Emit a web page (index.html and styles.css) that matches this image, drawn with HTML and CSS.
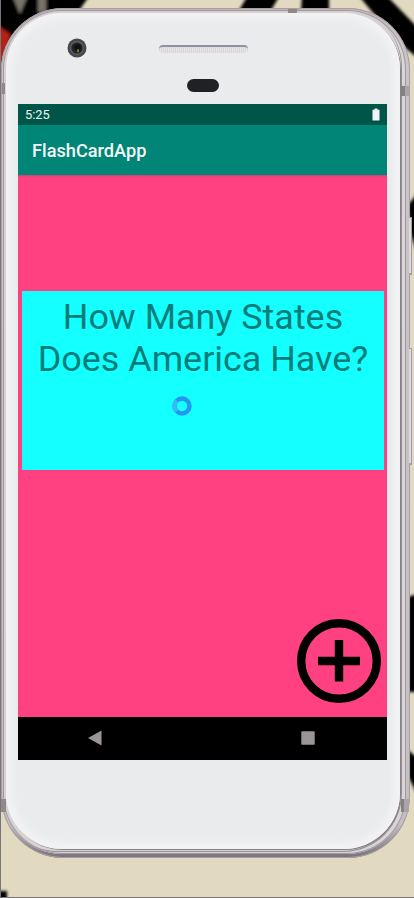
FILE: index.html
```html
<!DOCTYPE html>
<html lang="en">
<head>
<meta charset="utf-8">
<title>FlashCardApp</title>
<link rel="stylesheet" href="styles.css">
</head>
<body>
<svg class="wallpaper" viewBox="0 0 414 898" aria-hidden="true">
  <defs><filter id="soft" x="-20%" y="-20%" width="140%" height="140%"><feGaussianBlur stdDeviation="1.8"/></filter></defs>
  <g filter="url(#soft)">
    <path d="M-5-5H90L78 12 40 30-5 70Z"/>
    <path d="M-5 24L10 34 6 60-5 62Z" fill="#b52218"/>
    <path d="M12-5H28L20 14ZM38-5H46L46 12H38Z" fill="#777266"/>
    <path d="M248-5H280L270 12H238ZM302-5H329V12H301ZM358-5H386L420 30V60L396 40Z"/>
    <path d="M408 205L420 190V262L410 232ZM408 598Q414 592 420 598V692H408ZM408 750L420 760V800L408 776Z"/>
    <path d="M-4 891H7V902H-4Z"/>
  </g>
  <path d="M.5 0V897.5H414" fill="none" stroke="#77757a"/>
</svg>
<main class="phone">
  <div class="rim">
    <div class="body">
      <header class="hardware">
        <svg class="camera" viewBox="0 0 20 20" aria-hidden="true">
          <circle cx="10" cy="10" r="9.5" fill="#47484b"/><circle cx="10" cy="10" r="7" fill="#5b5c5f"/>
          <circle cx="10" cy="10" r="5.6" fill="#202224"/><circle cx="10.5" cy="9.5" r="3" fill="#111"/>
          <path d="M10 11.2h2v3h-2z" fill="#77712f"/>
        </svg>
        <div class="speaker"></div>
        <div class="sensor"></div>
      </header>
      <section class="screen">
        <div class="status"><span>5:25</span>
          <svg width="8" height="13" viewBox="0 0 8 13"><path d="M2.5.5h3v1.2H7.5v10.8H.5V1.7h2z" fill="#f4f4f4"/></svg>
        </div>
        <div class="appbar">FlashCardApp</div>
        <div class="content">
          <div class="card">
            <p class="question">How Many States<br>Does America Have?</p>
            <svg class="spinner" viewBox="0 0 20 20"><circle cx="10" cy="10" r="7.5"/><path d="M4.7 15.3A7.5 7.5 0 0 1 4.7 4.7"/></svg>
          </div>
          <svg class="add" viewBox="0 0 84 84"><circle cx="42" cy="42" r="37.8"/><path d="M42 21V62.500M21 42H63"/></svg>
        </div>
        <nav class="nav">
          <svg width="14" height="16" viewBox="0 0 14 16"><path d="M0 8L13.500 .5V15.500Z"/></svg>
          <svg width="14" height="14" viewBox="0 0 14 14"><rect x=".3" y=".2" width="13.400" height="13.600" rx=".8"/></svg>
        </nav>
      </section>
    </div>
  </div>
  <i class="band band-tl"></i><i class="band band-tr"></i><i class="band band-top"></i>
  <i class="band band-bl"></i><i class="band band-br"></i>
  <i class="key power"></i><i class="key volume"></i>
</main>
</body>
</html>
```
FILE: styles.css
```css
* { box-sizing: border-box; }
html, body { height: 100%; }
body {
  margin: 0;
  overflow: hidden;
  background: #e2d9c1;
  font-family: Roboto, sans-serif;
}
.wallpaper { position: absolute; inset: 0; width: 414px; height: 898px; }
.phone {
  position: relative;
  width: 409px;
  height: 850px;
  margin: 8px 0 0 1px;
  padding: 2px 4px 4px 2px;
  border-radius: 62px;
  background: linear-gradient(#bdb4b7, #cbc4c8 3%, #c5bec2 96%, #77717a);
  box-shadow: inset 0 0 0 1px #a69fa3;
}
.rim {
  height: 844px;
  padding: 3px 6px 5px 3px;
  border-radius: 59px;
  background: #d7d1d4;
  box-shadow: inset 0 0 0 1px #a09a9e, inset -4px -2px 0 0 #d9d4d7, inset -5px -3px 0 0 #969095;
}
.body {
  height: 836px;
  padding: 0 12px;
  border-radius: 56px;
  background: #e9ebed;
  box-shadow: inset 0 0 6px 7px #f2f2f3, 1px 1px 0 #878187;
}
.hardware { position: relative; height: 91px; }
.camera { position: absolute; left: 48.5px; top: 25px; width: 20px; height: 20px; }
.speaker {
  position: absolute; left: 141px; top: 32px; width: 89px; height: 8px;
  border-radius: 4px;
  border-top: 2px solid #8d929e;
  background: repeating-linear-gradient(90deg, #d8d4d7 0 1px, #e8e6e7 1px 2px);
}
.sensor { position: absolute; left: 169px; top: 66px; width: 32px; height: 13px; border-radius: 7px; background: #1f2124; }
.screen { width: 369px; height: 656px; display: flex; flex-direction: column; }
.status {
  height: 21px; padding: 0 7px 0 7px;
  display: flex; align-items: center; justify-content: space-between;
  background: #005549; color: #f1f5f4; font-size: 12.8px; line-height: 22px;
}
.appbar {
  height: 50px; padding-left: 14px;
  background: #008577; color: #f4f8f7;
  font-size: 18.2px; font-weight: 500; line-height: 52px;
}
.content {
  height: 542px; padding: 116px 3px 0 4px;
  display: flex; flex-direction: column;
  background: #ff4081;
  box-shadow: inset 0 2px 2px -1px #b64b72;
}
.card { height: 179px; padding-top: 5px; background: #14ffff; display: flex; flex-direction: column; align-items: center; }
.question { margin: 0; color: #007d79; font-size: 35.9px; line-height: 42px; text-align: center; white-space: nowrap; }
.spinner { width: 20px; height: 20px; margin: 16px 42px 0 0; fill: none; stroke: #2496f3; stroke-width: 4.4; }
.spinner path { stroke: #39b9f5; }
.add { width: 84px; height: 84px; margin: 149px 3px 0 auto; fill: none; stroke: #000; stroke-width: 8.4; }
.nav {
  height: 43px; padding: 0 72px 1px 70px;
  display: flex; align-items: center; justify-content: space-between;
  background: #000; fill: #9b959a;
}
.band { position: absolute; background: #8f898c; }
.band-tl { left: 1px; top: 75px; width: 3px; height: 11px; }
.band-tr { left: 400px; top: 78px; width: 9px; height: 10px; background: linear-gradient(90deg, #858083 40%, #aaa4a7 40%); }
.band-top { left: 287px; top: 1px; width: 9px; height: 4px; }
.band-bl { left: 0; top: 791px; width: 5px; height: 13px; }
.band-br { left: 400px; top: 791px; width: 8px; height: 13px; background: linear-gradient(90deg, #858083 40%, #aaa4a7 40%); }
.key { position: absolute; left: 408px; width: 3px; border: solid #a39da0; border-width: 1px 1px 2px 0; background: #dedadc; }
.power { top: 209px; height: 58px; }
.volume { top: 340px; height: 117px; }
```
